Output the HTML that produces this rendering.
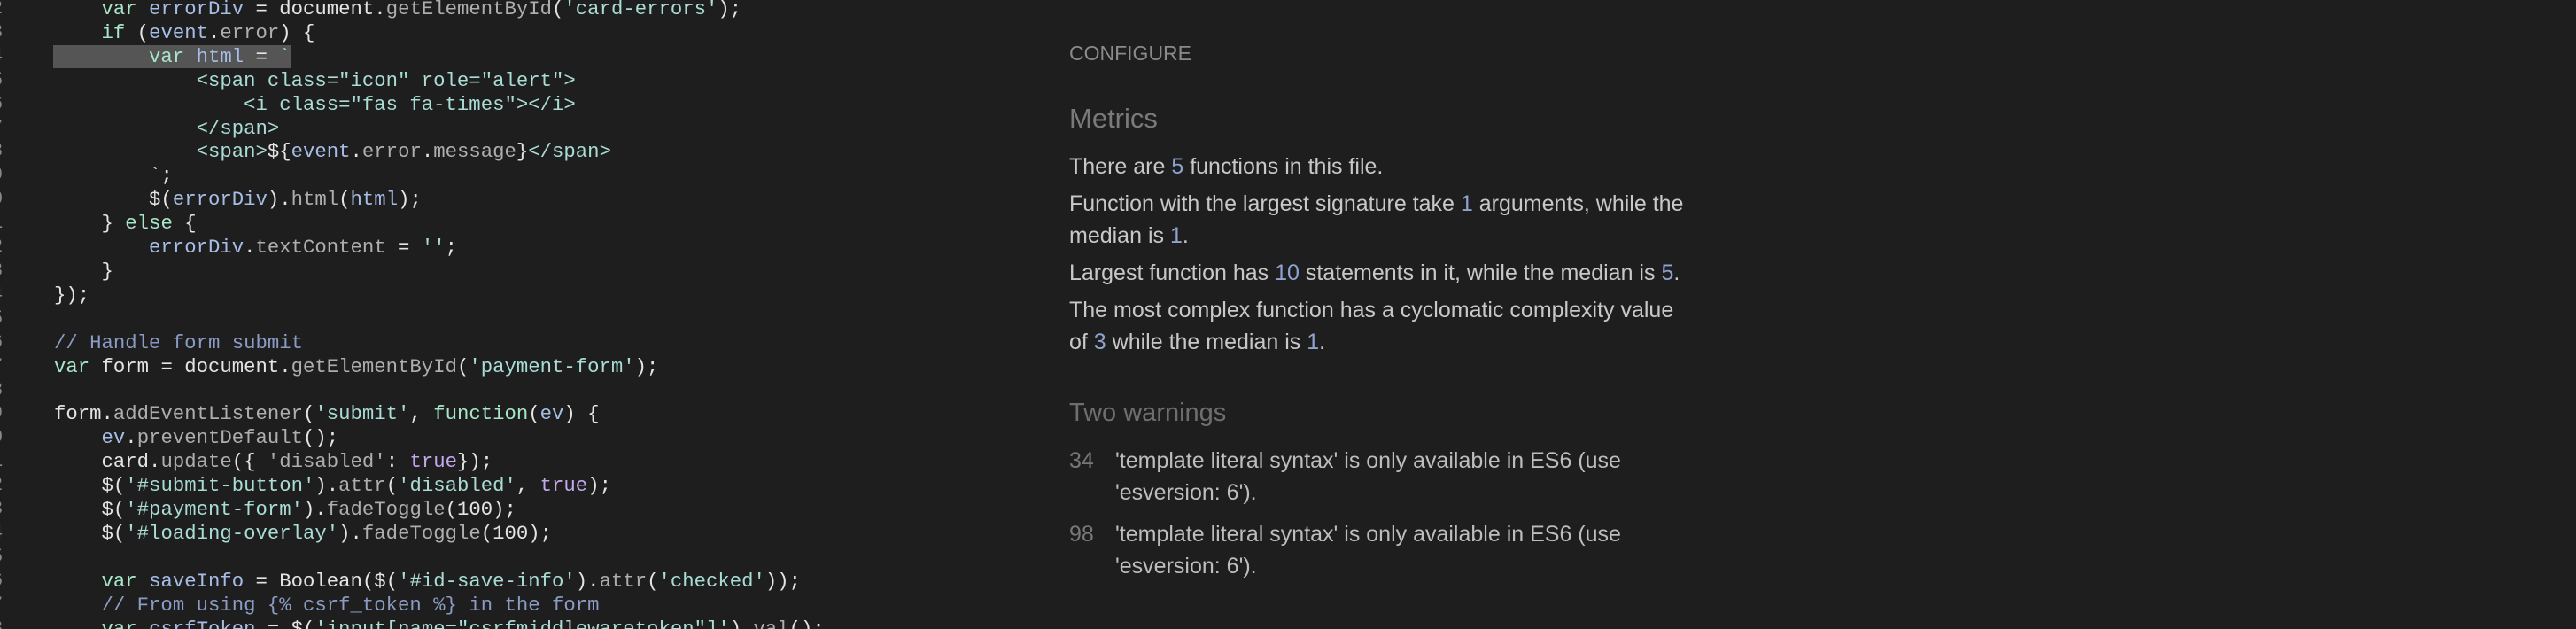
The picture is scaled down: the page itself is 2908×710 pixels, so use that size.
<!DOCTYPE html>
<html><head><meta charset="utf-8"><style>
html,body{margin:0;padding:0;background:#1e1e1e;width:2908px;height:710px;overflow:hidden;position:relative}
pre{position:absolute;left:61px;top:-3px;margin:0;font-family:"Liberation Mono",monospace;font-size:22.3px;line-height:26.9px;color:#e4e4e4;white-space:pre}
.k{color:#a8e6c8}.v{color:#a6bde6}.s{color:#a9dcd4}.m{color:#aeaeae}.c{color:#8a9bc4}.t{color:#c4a8ec}
.hl{position:absolute;left:60px;top:51px;width:269px;height:26px;background:#555}
.g{position:absolute;left:-10px;top:-3px;font-family:"Liberation Mono",monospace;font-size:22px;line-height:26.9px;color:#888;white-space:pre}
.r{position:absolute;left:1207px;font-family:"Liberation Sans",sans-serif}
.n{color:#8fa3d0}
.p{font-size:25px;color:#c8c8c8;line-height:36px;width:702px}
</style></head><body>
<div class="hl"></div>
<div class="g">2
3
4
5
6
7
8
9
0
1
2
3
4
5
6
7
8
9
0
1
2
3
4
5
6
7
8</div>
<pre>    <span class="k">var</span> <span class="v">errorDiv</span> = document.<span class="m">getElementById</span>(<span class="s">'card-errors'</span>);
    <span class="k">if</span> (<span class="v">event</span>.<span class="m">error</span>) {
        <span class="k">var</span> <span class="v">html</span> = <span class="s">`</span>
<span class="s">            &lt;span class="icon" role="alert"&gt;</span>
<span class="s">                &lt;i class="fas fa-times"&gt;&lt;/i&gt;</span>
<span class="s">            &lt;/span&gt;</span>
<span class="s">            &lt;span&gt;</span>${<span class="v">event</span>.<span class="m">error</span>.<span class="m">message</span>}<span class="s">&lt;/span&gt;</span>
<span class="s">        `</span>;
        $(<span class="v">errorDiv</span>).<span class="m">html</span>(<span class="v">html</span>);
    } <span class="k">else</span> {
        <span class="v">errorDiv</span>.<span class="m">textContent</span> = <span class="s">''</span>;
    }
});

<span class="c">// Handle form submit</span>
<span class="k">var</span> form = document.<span class="m">getElementById</span>(<span class="s">'payment-form'</span>);

form.<span class="m">addEventListener</span>(<span class="s">'submit'</span>, <span class="k">function</span>(<span class="v">ev</span>) {
    <span class="v">ev</span>.<span class="m">preventDefault</span>();
    card.<span class="m">update</span>({ <span class="m">'disabled'</span>: <span class="t">true</span>});
    $(<span class="s">'#submit-button'</span>).<span class="m">attr</span>(<span class="s">'disabled'</span>, <span class="t">true</span>);
    $(<span class="s">'#payment-form'</span>).<span class="m">fadeToggle</span>(100);
    $(<span class="s">'#loading-overlay'</span>).<span class="m">fadeToggle</span>(100);

    <span class="k">var</span> <span class="v">saveInfo</span> = Boolean($(<span class="s">'#id-save-info'</span>).<span class="m">attr</span>(<span class="s">'checked'</span>));
    <span class="c">// From using {% csrf_token %} in the form</span>
    <span class="k">var</span> <span class="v">csrfToken</span> = $(<span class="s">'input[name="csrfmiddlewaretoken"]'</span>).<span class="m">val</span>();</pre>

<div class="r" style="top:47px;font-size:23px;color:#8a8a8a">CONFIGURE</div>
<div class="r" style="top:116px;font-size:31px;color:#7a7a7a">Metrics</div>
<div class="r p" style="top:170px">There are <span class="n">5</span> functions in this file.</div>
<div class="r p" style="top:212px">Function with the largest signature take <span class="n">1</span> arguments, while the median is <span class="n">1</span>.</div>
<div class="r p" style="top:290px">Largest function has <span class="n">10</span> statements in it, while the median is <span class="n">5</span>.</div>
<div class="r p" style="top:332px">The most complex function has a cyclomatic complexity value of <span class="n">3</span> while the median is <span class="n">1</span>.</div>
<div class="r" style="top:450px;font-size:29px;color:#6e6e6e">Two warnings</div>
<div class="r p" style="top:502px;color:#777;width:50px">34</div>
<div class="r p" style="top:502px;left:1259px;color:#bdbdbd;width:640px">'template literal syntax' is only available in ES6 (use 'esversion: 6').</div>
<div class="r p" style="top:585px;color:#777;width:50px">98</div>
<div class="r p" style="top:585px;left:1259px;color:#bdbdbd;width:640px">'template literal syntax' is only available in ES6 (use 'esversion: 6').</div>
</body></html>
